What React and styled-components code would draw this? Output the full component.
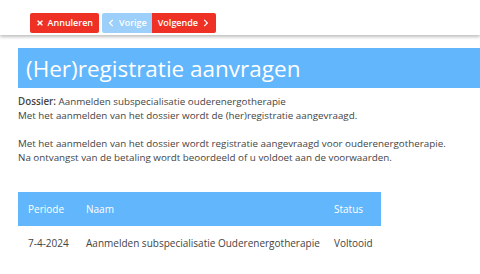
import React from 'react';
import styled, { createGlobalStyle, css } from 'styled-components';
import { FaTimes, FaChevronLeft, FaChevronRight } from 'react-icons/fa';

const GlobalStyle = createGlobalStyle`
  body {
    margin: 0;
    background: #fff;
    font-family: "Open Sans", "Noto Sans", sans-serif;
    color: #444;
  }
`;

const TopBar = styled.div`
  height: 35px;
  display: flex;
  align-items: center;
  padding-left: 30px;
  padding-top: 10px;
  box-sizing: border-box;
  box-shadow: 0 2px 3px rgba(0, 0, 0, 0.25);
`;

const ButtonGroup = styled.div`
  display: flex;
  margin-left: 3px;
`;

const Button = styled.button`
  height: 20px;
  border: none;
  border-radius: 2px;
  padding: 0 5.5px;
  display: flex;
  align-items: center;
  gap: 4px;
  font-family: inherit;
  font-size: 9px;
  font-weight: 600;
  color: #fff;
  background: ${p => (p.disabled ? '#9cd0fb' : '#ee3124')};
  ${p =>
    p.left &&
    css`
      border-top-right-radius: 0;
      border-bottom-right-radius: 0;
    `}
  ${p =>
    p.right &&
    css`
      border-top-left-radius: 0;
      border-bottom-left-radius: 0;
    `}
  svg {
    font-size: 8px;
  }
`;

const Content = styled.div`
  padding: 13px 0 0 18px;
`;

const Title = styled.h1`
  margin: 0;
  height: 40px;
  display: flex;
  align-items: center;
  padding-left: 8px;
  background: #62b6fc;
  color: #fff;
  font-size: 22.5px;
  font-weight: 500;
`;

const Text = styled.p`
  margin: ${p => (p.spaced ? '14px' : '7px')} 0 0;
  font-size: 9.8px;
  line-height: 14px;
  b {
    font-weight: 600;
  }
`;

const Table = styled.table`
  margin-top: 27px;
  border-collapse: collapse;
  width: 363px;
  font-size: 10px;
  th {
    background: #62b6fc;
    color: #fff;
    font-weight: 400;
    text-align: left;
    height: 34px;
    padding: 0 0 0 10px;
  }
  td {
    height: 34px;
    padding: 0 0 0 10px;
  }
`;

export default function App() {
  return (
    <>
      <GlobalStyle />
      <TopBar>
        <Button>
          <FaTimes /> Annuleren
        </Button>
        <ButtonGroup>
          <Button left disabled>
            <FaChevronLeft /> Vorige
          </Button>
          <Button right>
            Volgende <FaChevronRight />
          </Button>
        </ButtonGroup>
      </TopBar>
      <Content>
        <Title>(Her)registratie aanvragen</Title>
        <Text>
          <b>Dossier:</b> Aanmelden subspecialisatie ouderenergotherapie
          <br />
          Met het aanmelden van het dossier wordt de (her)registratie aangevraagd.
        </Text>
        <Text spaced>
          Met het aanmelden van het dossier wordt registratie aangevraagd voor ouderenergotherapie.
          <br />
          Na ontvangst van de betaling wordt beoordeeld of u voldoet aan de voorwaarden.
        </Text>
        <Table>
          <thead>
            <tr>
              <th style={{ width: 48 }}>Periode</th>
              <th>Naam</th>
              <th style={{ width: 47 }}>Status</th>
            </tr>
          </thead>
          <tbody>
            <tr>
              <td>7-4-2024</td>
              <td>Aanmelden subspecialisatie Ouderenergotherapie</td>
              <td>Voltooid</td>
            </tr>
          </tbody>
        </Table>
      </Content>
    </>
  );
}
